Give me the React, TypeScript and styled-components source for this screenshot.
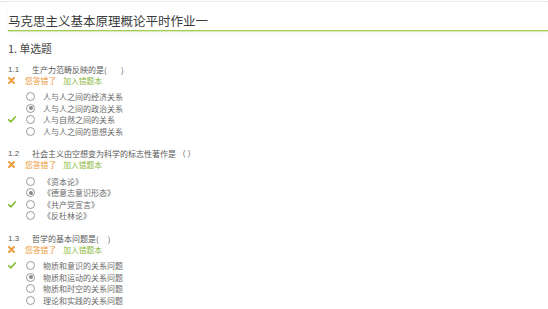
import { createGlobalStyle, styled } from 'styled-components';

const GlobalStyle = createGlobalStyle`
  body {
    margin: 0;
    background: #fff;
    font-family: "Noto Sans CJK SC", "Noto Sans", "Liberation Sans", sans-serif;
  }
`;

const Page = styled.div`
  margin-top: 1px;
  border-top: 1px solid #e8e8e8;
  width: 548px;
`;

const Header = styled.div`
  margin-left: 8px;
  padding-top: 11px;
  padding-bottom: 1px;
  border-bottom: 1px solid #a2cc55;
  box-shadow: 0 1px 0 #d9ebb8, 0 2px 6px #f6f6f6;
`;

const Title = styled.h1`
  margin: 0;
  font-size: 12.5px;
  line-height: 16px;
  font-weight: normal;
  color: #3c3c3c;
`;

const Section = styled.div`
  padding: 9px 0 0 8px;
`;

const SectionTitle = styled.div`
  font-size: 10.8px;
  line-height: 16px;
  color: #444;
  margin-bottom: 8px;
`;

const Question = styled.div`
  margin-bottom: 11px;
`;

const QuestionRow = styled.div`
  display: flex;
  font-size: 8px;
  line-height: 11px;
  color: #5a5a5a;
`;

const QuestionNo = styled.span`
  width: 24px;
  font-family: "Liberation Sans", sans-serif;
`;

const FeedbackRow = styled.div`
  display: flex;
  align-items: center;
  height: 11px;
  font-size: 7.8px;
  margin-bottom: 5px;
`;

const Slot = styled.span<{ $w: number }>`
  width: ${p => p.$w}px;
  display: flex;
  align-items: center;
`;

const Wrong = styled.span`
  color: #ee9a3a;
`;

const AddBook = styled.span`
  margin-left: 7px;
  color: #8cba45;
`;

const OptionRow = styled.div`
  display: flex;
  align-items: center;
  height: 11.6px;
  font-size: 8px;
  color: #6a6a6a;
`;

const Radio = styled.span<{ $checked?: boolean }>`
  box-sizing: border-box;
  width: 9px;
  height: 9px;
  border-radius: 50%;
  border: 1px solid #9a9a9a;
  background: #fff;
  display: flex;
  align-items: center;
  justify-content: center;
  margin-right: 8px;

  &::after {
    content: '';
    width: 4px;
    height: 4px;
    border-radius: 50%;
    background: ${p => (p.$checked ? '#8a8a8a' : 'transparent')};
  }
`;

const Cross = () => (
  <svg width="7" height="7" viewBox="0 0 7 7">
    <path d="M1 1L6 6M6 1L1 6" stroke="#ee9a3a" strokeWidth="1.9" strokeLinecap="round" />
  </svg>
);

const Check = () => (
  <svg width="8" height="7" viewBox="0 0 8 7">
    <path d="M0.8 3.8L3 5.8L7.2 1" stroke="#84bd32" strokeWidth="1.7" fill="none" strokeLinecap="round" strokeLinejoin="round" />
  </svg>
);

interface Q {
  no: string;
  text: string;
  options: string[];
  chosen: number;
  correct: number;
}

const questions: Q[] = [
  {
    no: '1.1',
    text: '生产力范畴反映的是(\u00a0\u00a0\u00a0\u00a0\u00a0\u00a0\u00a0\u00a0)',
    options: ['人与人之间的经济关系', '人与人之间的政治关系', '人与自然之间的关系', '人与人之间的思想关系'],
    chosen: 1,
    correct: 2,
  },
  {
    no: '1.2',
    text: '社会主义由空想变为科学的标志性著作是 （\u00a0）',
    options: ['《资本论》', '《德意志意识形态》', '《共产党宣言》', '《反杜林论》'],
    chosen: 1,
    correct: 2,
  },
  {
    no: '1.3',
    text: '哲学的基本问题是(\u00a0\u00a0\u00a0\u00a0\u00a0)',
    options: ['物质和意识的关系问题', '物质和运动的关系问题', '物质和时空的关系问题', '理论和实践的关系问题'],
    chosen: 1,
    correct: 0,
  },
];

export default function App() {
  return (
    <Page>
      <GlobalStyle />
      <Header>
        <Title>马克思主义基本原理概论平时作业一</Title>
      </Header>
      <Section>
        <SectionTitle>1. 单选题</SectionTitle>
        {questions.map(q => (
          <Question key={q.no}>
            <QuestionRow>
              <QuestionNo>{q.no}</QuestionNo>
              <span>{q.text}</span>
            </QuestionRow>
            <FeedbackRow>
              <Slot $w={17}><Cross /></Slot>
              <Wrong>您答错了</Wrong>
              <AddBook>加入错题本</AddBook>
            </FeedbackRow>
            {q.options.map((o, i) => (
              <OptionRow key={o}>
                <Slot $w={18}>{i === q.correct && <Check />}</Slot>
                <Radio $checked={i === q.chosen} />
                <span>{o}</span>
              </OptionRow>
            ))}
          </Question>
        ))}
      </Section>
    </Page>
  );
}
